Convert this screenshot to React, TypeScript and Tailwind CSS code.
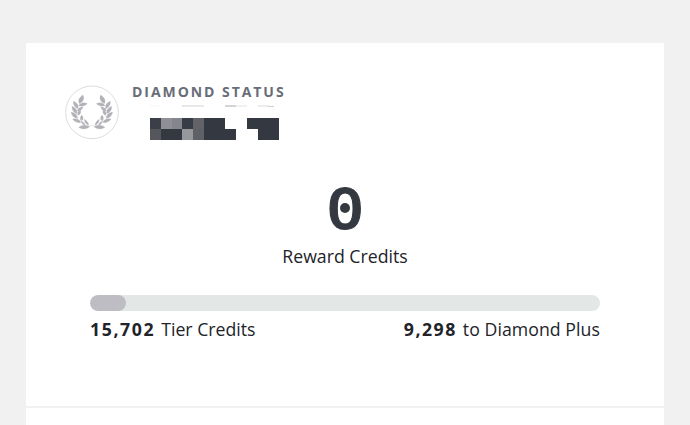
const leaves = [
  "M73 86C68 77 72 67 84 60C89 70 85 80 73 86Z",
  "M69 101C59 97 54 90 55 79C66 83 71 90 69 101Z",
  "M71 92C77 83 86 81 97 86C89 93 80 95 71 92Z",
  "M66 116C55 112 50 105 51 94C62 98 67 105 66 116Z",
  "M67 108C68 100 74 96 84 95C82 104 76 108 67 108Z",
  "M68 130C57 129 50 122 48 111C60 113 67 119 68 130Z",
  "M69 121C66 114 68 109 76 105C79 112 77 118 69 121Z",
  "M78 142C68 145 58 140 53 132C64 129 73 133 78 142Z",
  "M79 138C74 132 75 126 80 120C86 127 86 133 79 138Z",
  "M91 152C84 150 79 144 79 138C84 140 90 145 91 152Z",
  "M101 151C92 147 88 141 88 133C96 138 101 144 101 151Z",
  "M104 155C94 163 81 164 71 157C81 149 93 149 104 155Z",
];

const tiles = [
  "#3a3f48", "#8f9095", "#85868b", "#373c46", "#626369", "#333841", "#333841", "#ffffff", "#ffffff", "#333841", "#333841", "#333841",
  "#55575d", "#333841", "#333841", "#97989c", "#606167", "#333841", "#333841", "#333841", "#ffffff", "#ffffff", "#333841", "#333841",
];

const Laurel = () => (
  <svg viewBox="0 0 225 225" className="size-[75px] shrink-0">
    <circle cx="111" cy="112" r="79" fill="#fff" stroke="#dcdde0" strokeWidth="3" />
    <g fill="#b1b2b8" stroke="#b1b2b8" strokeWidth="0.8">
      {leaves.map((d) => (
        <path key={d} d={d} />
      ))}
      <g transform="translate(221 0) scale(-1 1)">
        {leaves.map((d) => (
          <path key={d} d={d} />
        ))}
      </g>
    </g>
    <path d="M103 154L111 150L119 154" fill="none" stroke="#d2d3d6" strokeWidth="2" />
  </svg>
);

const Redacted = () => (
  <svg viewBox="0 0 130 37" className="ml-[18px] mt-[1px] h-[37px] w-[130px]" shapeRendering="crispEdges">
    <rect x="0" y="2" width="10" height="2" fill="#fafafa" />
    <rect x="32" y="2" width="22" height="2" fill="#e8e8e9" />
    <rect x="75" y="2" width="11" height="2" fill="#d4d4d6" />
    <rect x="86" y="2" width="11" height="2" fill="#f1f1f1" />
    <rect x="108" y="2" width="11" height="2" fill="#ececed" />
    <rect x="118" y="3" width="6" height="1" fill="#d0d0d2" />
    {tiles.map((fill, i) => (
      <rect key={i} x={(i % 12) * 10.75} y={i < 12 ? 15 : 26} width="10.8" height={i < 12 ? 11 : 10.6} fill={fill} />
    ))}
  </svg>
);

export default function App() {
  return (
    <div className="h-[425px] overflow-hidden bg-[#f1f1f1] pl-[26px] pr-[26px] pt-[43px] font-['Open_Sans',sans-serif] text-[#212329]">
      <section className="h-[365px] border-b-2 border-[#f1f1f1] bg-white pt-8">
        <header className="flex pl-[29px]">
          <Laurel />
          <div className="pl-[2px] pt-[7px]">
            <h2 className="text-[14px] font-bold leading-5 tracking-[1.95px] text-[#686d78] whitespace-nowrap">
              DIAMOND STATUS
            </h2>
            <Redacted />
          </div>
        </header>

        <div className="mt-[21px] text-center">
          <div className="relative mx-auto w-fit text-[57px] leading-[72px] text-[#333841]">
            <span className="inline-block scale-x-[1.1] font-semibold [-webkit-text-stroke:1px_#333841]">0</span>
            <span className="absolute left-1/2 top-[37px] size-[10px] -translate-x-1/2 -translate-y-1/2 rounded-full bg-[#333841]" />
          </div>
          <p className="mt-px text-[17.7px] leading-6">Reward Credits</p>
        </div>

        <div className="mx-16 mt-[27px]">
          <div className="h-4 overflow-hidden rounded-full bg-[#e3e7e6]">
            <div className="h-full w-9 rounded-full bg-[#bebdc3]" />
          </div>
          <div className="mt-[6px] flex justify-between text-[17.7px] leading-6 whitespace-nowrap">
            <p>
              <strong className="mr-[6px] font-bold tracking-[1.6px]">15,702</strong>
              Tier Credits
            </p>
            <p>
              <strong className="mr-[6px] font-bold tracking-[1.5px]">9,298</strong>
              <span className="tracking-[0.06px]">to Diamond Plus</span>
            </p>
          </div>
        </div>
      </section>
      <section className="h-[17px] bg-white" />
    </div>
  );
}
